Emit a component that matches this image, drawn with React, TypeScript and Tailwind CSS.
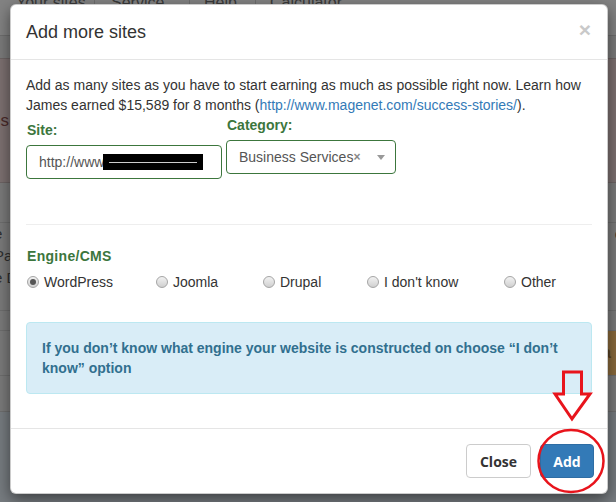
import React from 'react';

const radios = [
  { label: 'WordPress', w: 'w-[129px]', checked: true },
  { label: 'Joomla', w: 'w-[107px]' },
  { label: 'Drupal', w: 'w-[104px]' },
  { label: "I don't know", w: 'w-[137px]' },
  { label: 'Other', w: 'w-auto' },
];

function Radio({ checked }: { checked?: boolean }) {
  return (
    <span className="w-[12px] h-[12px] rounded-full border border-[#a5a5a5] bg-gradient-to-b from-[#f2f2f2] to-[#d0d0d0] flex items-center justify-center">
      {checked && <span className="w-[6px] h-[6px] rounded-full bg-[#555]" />}
    </span>
  );
}

function BackdropPage() {
  return (
    <div className="absolute inset-0 flex flex-col bg-[#7b7b7b] text-[#2e2e2e] text-[14px]">
      <div className="h-[38px] bg-[#838383] border-b border-[#6e6e6e] flex items-start text-[#3a3a3a] text-[16px] leading-[10px] -mt-[2px]">
        <span className="pl-[16px] w-[95px] border-r border-[#6e6e6e] h-full">Your sites</span>
        <span className="pl-[16px] w-[95px] border-r border-[#6e6e6e] h-full">Service</span>
        <span className="pl-[14px] w-[66px] border-r border-[#6e6e6e] h-full">Help</span>
        <span className="pl-[14px]">Calculator</span>
      </div>
      <div className="h-[22px]" />
      <div className="h-[125px] bg-[#7d7171] border-y border-[#6d6464] flex items-center pl-0 text-[#4a2a2a] text-[17px]">
        <span className="-ml-[9px]">es</span>
      </div>
      <div className="h-[40px] border-b border-[#6e6e6e]" />
      <div className="flex flex-col leading-[22px] text-[15px] -ml-[6px]">
        <span className="flex justify-between"><span>e</span><span className="-mr-[7px]">e</span></span>
        <span>Pa</span>
        <span>e D</span>
      </div>
      <div className="h-[22px] border-b border-[#6e6e6e]" />
      <div className="h-[20px] border-b border-[#6e6e6e]" />
      <div className="h-[44px] flex justify-end">
        <div className="w-[24px] bg-[#8a6a3c] text-[#5a4020] font-bold text-[16px] flex items-center pl-[10px]">a</div>
      </div>
      <div className="h-[36px] border-t border-[#6e6e6e]" />
      <div className="flex-1 border-t border-[#6e6e6e] bg-[#777c80]" />
    </div>
  );
}

export default function App() {
  return (
    <div className="relative w-[616px] h-[502px] overflow-hidden font-['Liberation_Sans',Arial,sans-serif] text-[#333]">
      <BackdropPage />

      <div className="absolute left-[10px] top-[4px] w-[598px] h-[490px] bg-white rounded-[6px] shadow-[0_5px_15px_rgba(0,0,0,0.5)] border border-black/20 flex flex-col">
        <div className="h-[55px] border-b border-[#e5e5e5] flex items-center justify-between pl-[15px] pr-[16px]">
          <h4 className="text-[18px] text-[#333] pt-[1px]">Add more sites</h4>
          <span className="text-[21px] font-bold text-[#c9c9c9] leading-none -mt-[5px]">×</span>
        </div>

        <div className="flex-1 px-[15px] pt-[15px] flex flex-col">
          <p className="text-[14px] leading-[20px] text-[#333]">
            Add as many sites as you have to start earning as much as possible right now. Learn how James earned $15,589 for 8 months (
            <span className="text-[#337ab7]">http://www.magenet.com/success-stories/</span>).
          </p>

          <div className="flex gap-[4px] mt-[5px]">
            <div className="w-[196px] flex flex-col">
              <label className="font-bold text-[14px] text-[#3c763d] leading-[20px] pl-[1px]">Site:</label>
              <div className="mt-[5px] h-[34px] border border-[#3c763d] rounded-[4px] flex items-center pl-[12px] text-[14px] text-[#555]">
                <span>http://www.</span>
                <span className="w-[100px] h-[16px] bg-black -ml-[4px] flex items-center justify-center">
                  <span className="w-[88px] h-px bg-white/80" />
                </span>
              </div>
            </div>
            <div className="w-[170px] flex flex-col -mt-[5px]">
              <label className="font-bold text-[14px] text-[#3c763d] leading-[20px] pl-[1px]">Category:</label>
              <div className="mt-[5px] h-[34px] border border-[#3c763d] rounded-[4px] flex items-center pl-[12px] pr-[10px] text-[14px] text-[#555]">
                <span>Business Services</span>
                <span className="text-[#888] text-[12px] font-bold">×</span>
                <span className="ml-auto w-0 h-0 border-x-[4px] border-x-transparent border-t-[5px] border-t-[#999]" />
              </div>
            </div>
          </div>

          <div className="mt-[45px] border-t border-[#eee]" />

          <div className="mt-[21px] font-bold text-[14px] text-[#3c763d] leading-[20px] pl-[1px] tracking-[0.3px]">Engine/CMS</div>
          <div className="mt-[6px] flex items-center text-[14px] text-[#333] leading-[20px] pl-[1px]">
            {radios.map((r) => (
              <span key={r.label} className={`${r.w} flex items-center gap-[5px]`}>
                <Radio checked={r.checked} />
                <span>{r.label}</span>
              </span>
            ))}
          </div>

          <div className="mt-[30px] h-[72px] bg-[#d9edf7] border border-[#bce8f1] rounded-[4px] px-[15px] pt-[15px] font-bold text-[14px] leading-[20px] text-[#31708f]">
            If you don’t know what engine your website is constructed on choose “I don’t know” option
          </div>
        </div>

        <div className="h-[65px] border-t border-[#e5e5e5] flex items-center justify-end gap-[9px] pr-[13px]">
          <button className="w-[65px] h-[34px] border border-[#ccc] rounded-[4px] bg-white font-['Open_Sans',sans-serif] font-bold text-[14px] text-[#333]">
            Close
          </button>
          <button className="w-[54px] h-[34px] border border-[#2e6da4] rounded-[4px] bg-[#337ab7] font-['Open_Sans',sans-serif] font-bold text-[14px] text-white">
            Add
          </button>
        </div>
      </div>

      <svg className="absolute left-0 top-0 pointer-events-none" width="616" height="502">
        <path
          d="M563.5 372 H581.5 V394 H590 L572 419 L555 394 H563.5 Z"
          fill="none"
          stroke="#e8141c"
          strokeWidth="3"
          strokeLinejoin="miter"
        />
        <ellipse cx="571" cy="461" rx="32.5" ry="31" fill="none" stroke="#e8141c" strokeWidth="2.5" />
      </svg>
    </div>
  );
}
